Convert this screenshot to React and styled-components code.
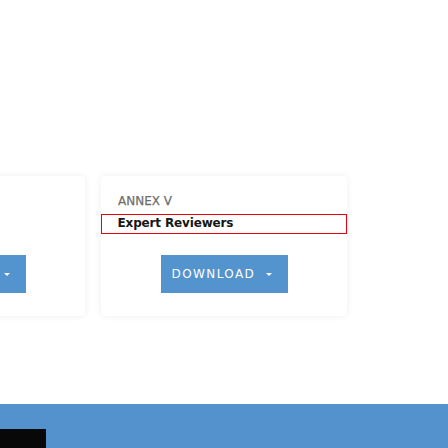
import React from "react";
import styled, { createGlobalStyle } from "styled-components";

const Global = createGlobalStyle`
  html, body { margin: 0; padding: 0; background: #fff; }
  body { font-family: "DejaVu Sans", Verdana, sans-serif; overflow: hidden; }
  * { box-sizing: border-box; }
`;

const Page = styled.div`
  width: 448px;
  height: 448px;
  display: flex;
  flex-direction: column;
  overflow: hidden;
`;

const Main = styled.main`
  height: 404px;
  padding-top: 176px;
  overflow: hidden;
`;

const Track = styled.div`
  display: flex;
  gap: 16px;
  transform: translateX(-161px);
`;

const Card = styled.article`
  flex: 0 0 246px;
  height: 140px;
  background: #fff;
  border-radius: 4px;
  box-shadow: 0 0 7px rgba(0, 0, 0, 0.07);
  padding: 18px 0 23px;
  display: flex;
  flex-direction: column;
`;

const Label = styled.div`
  padding: 0 17px;
  height: 20px;
  font-size: 12px;
  font-weight: 400;
  color: #6e6e6e;
  line-height: 15px;
  -webkit-text-stroke: 0.25px #6e6e6e;
`;

const Title = styled.div`
  height: 20px;
  padding: 0 15.5px;
  font-size: 12px;
  font-weight: 700;
  letter-spacing: -0.15px;
  color: #161616;
  line-height: 17px;
  border: 1.5px solid ${(p) => (p.$selected ? "#e8000b" : "transparent")};
`;

const Actions = styled.div`
  margin-top: 21px;
  display: flex;
  justify-content: center;
`;

const Button = styled.button`
  width: 127px;
  height: 38px;
  border: none;
  background: #5393ce;
  color: #fff;
  font-family: "DejaVu Sans", Verdana, sans-serif;
  font-size: 12px;
  font-weight: 400;
  letter-spacing: 1.4px;
  display: flex;
  align-items: center;
  justify-content: flex-start;
  gap: 11px;
  padding: 0 0 0 11px;
  cursor: pointer;
`;

const Caret = styled.span`
  width: 0;
  height: 0;
  border-left: 3.5px solid transparent;
  border-right: 3.5px solid transparent;
  border-top: 3.5px solid #fff;
`;

const Footer = styled.footer`
  flex: 1;
  background: #5392cd;
  display: flex;
  align-items: flex-end;
`;

const Corner = styled.div`
  width: 46px;
  height: 19px;
  background: #080808;
`;

const items = [
  { label: "ANNEX IV", title: "Glossary" },
  { label: "ANNEX V", title: "Expert Reviewers", selected: true },
];

export default function App() {
  return (
    <Page>
      <Global />
      <Main>
        <Track>
          {items.map((it) => (
            <Card key={it.label}>
              <Label>{it.label}</Label>
              <Title $selected={it.selected}>{it.title}</Title>
              <Actions>
                <Button>
                  DOWNLOAD<Caret />
                </Button>
              </Actions>
            </Card>
          ))}
        </Track>
      </Main>
      <Footer>
        <Corner />
      </Footer>
    </Page>
  );
}
